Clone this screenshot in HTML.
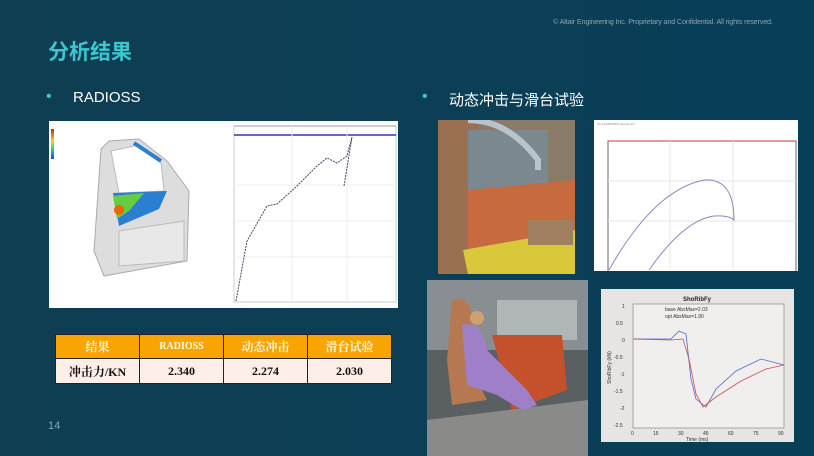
<!DOCTYPE html>
<html><head><meta charset="utf-8"><style>
*{margin:0;padding:0;box-sizing:border-box}
body{width:814px;height:456px;overflow:hidden;background:linear-gradient(90deg,#0f3e52 0%,#0c3f55 50%,#073e58 100%);font-family:"Liberation Sans","Noto Sans CJK SC",sans-serif;position:relative}
.a{position:absolute}
.copy{left:553px;top:17px;font-size:7.3px;color:#8aa3ae;letter-spacing:-0.2px}
.title{left:48px;top:36px;font-size:21px;font-weight:bold;color:#3cc6cf}
.b{font-size:15px;color:#fff}
.dot{color:#3cc6cf;font-size:16px}
table{border-collapse:collapse;font-family:"Liberation Serif","Noto Serif CJK SC",serif}
td{border:1px solid #222;text-align:center;width:84px;font-size:12px;font-weight:bold}
tr.h td{background:#f8a504;color:#fff8e0;height:24px}
tr.r td{background:#fdefe8;color:#111;height:25px}
</style></head><body>
<div class="a copy">© Altair Engineering Inc. Proprietary and Confidential. All rights reserved.</div>
<div class="a title">分析结果</div>
<div class="a dot" style="left:46px;top:88px">•</div>
<div class="a b" style="left:73px;top:89px">RADIOSS</div>
<div class="a dot" style="left:422px;top:88px">•</div>
<div class="a b" style="left:449px;top:89px">动态冲击与滑台试验</div>

<svg class="a" style="left:49px;top:121px" width="173" height="187" viewBox="0 0 173 187">
<rect width="173" height="187" fill="#fff"/>
<defs><linearGradient id="g" x1="0" y1="0" x2="0" y2="1"><stop offset="0" stop-color="#d22"/><stop offset=".4" stop-color="#dd2"/><stop offset=".7" stop-color="#2c8"/><stop offset="1" stop-color="#24d"/></linearGradient></defs>
<rect x="2" y="8" width="3" height="30" fill="url(#g)"/>
<path d="M52 28 L60 20 L90 18 L118 40 L140 70 L138 140 L55 155 L45 130 Z" fill="#ddd" stroke="#aaa"/>
<path d="M62 30 L90 24 L112 42 L115 70 L70 72 Z" fill="#fff" stroke="#bbb"/>
<path d="M64 72 L118 70 L110 88 L70 105 Z" fill="#2a7fd0"/>
<path d="M64 75 L95 72 L80 90 L68 98 Z" fill="#6c4"/>
<circle cx="70" cy="89" r="5" fill="#e60"/>
<path d="M70 110 L135 100 L135 140 L70 145 Z" fill="#e8e8e8" stroke="#bbb"/>
<path d="M85 22 L112 40" stroke="#2a7fd0" stroke-width="4"/>
</svg>
<svg class="a" style="left:222px;top:121px" width="176" height="187" viewBox="0 0 176 187">
<rect width="176" height="187" fill="#fff"/>
<rect x="12" y="5" width="162" height="176" fill="none" stroke="#ccc"/>
<line x1="12" y1="5" x2="174" y2="5" stroke="#999"/>
<line x1="12" y1="14" x2="174" y2="14" stroke="#33b" stroke-width="1.5"/>
<g stroke="#eee"><line x1="12" y1="64" x2="174" y2="64"/><line x1="12" y1="100" x2="174" y2="100"/><line x1="12" y1="136" x2="174" y2="136"/><line x1="70" y1="5" x2="70" y2="181"/><line x1="125" y1="5" x2="125" y2="181"/></g>
<path d="M14 180 L25 120 L45 85 L55 83 L75 65 L95 45 L105 37 L115 42 L125 35 L130 16 L122 65" fill="none" stroke="#446" stroke-dasharray="2 1"/>
</svg>

<svg class="a" style="left:438px;top:120px" width="137" height="154" viewBox="0 0 137 154">
<rect width="137" height="154" fill="#8a7a68"/>
<rect x="0" y="0" width="40" height="154" fill="#9a7050"/>
<rect x="30" y="10" width="80" height="60" fill="#7b8890"/>
<path d="M30 70 L137 60 L137 154 L30 154 Z" fill="#c86a40"/>
<path d="M25 130 L137 110 L137 154 L30 154 Z" fill="#d8c83a"/>
<path d="M30 0 Q70 0 100 40 L100 50" fill="none" stroke="#b8c4cc" stroke-width="6"/>
<rect x="90" y="100" width="45" height="25" fill="#a08060"/>
</svg>
<svg class="a" style="left:594px;top:120px" width="204" height="151" viewBox="0 0 204 151">
<rect width="204" height="151" fill="#fff"/>
<rect x="14" y="21" width="188" height="132" fill="none" stroke="#666"/>
<line x1="14" y1="21" x2="202" y2="21" stroke="#c33"/>
<g stroke="#e6e6e6"><line x1="14" y1="61" x2="202" y2="61"/><line x1="14" y1="101" x2="202" y2="101"/><line x1="76" y1="21" x2="76" y2="150"/><line x1="139" y1="21" x2="139" y2="150"/></g>
<path d="M15 150 Q60 70 110 60 Q140 58 140 100 Q135 95 120 96 Q90 100 55 150" fill="none" stroke="#88b"/>
<g fill="#888" font-size="3"><text x="3" y="5">SS 1234567890 sample text</text></g>
</svg>

<svg class="a" style="left:427px;top:280px" width="161" height="176" viewBox="0 0 161 176">
<rect width="161" height="176" fill="#5a5f62"/>
<rect x="0" y="0" width="161" height="70" fill="#888e92"/>
<rect x="70" y="20" width="80" height="40" fill="#b0b5b8"/>
<path d="M0 140 L161 120 L161 176 L0 176 Z" fill="#8a8a88"/>
<path d="M65 55 L135 55 L140 110 L85 130 Z" fill="#c5502c"/>
<path d="M25 20 Q45 15 45 40 L50 100 L60 120 L25 125 L20 80 Z" fill="#b57850"/>
<path d="M35 45 Q55 40 60 70 L100 110 L110 125 L95 130 L70 115 L40 105 Z" fill="#9f7fc8"/>
<circle cx="50" cy="38" r="7" fill="#d0a070"/>
</svg>
<svg class="a" style="left:601px;top:289px" width="193" height="153" viewBox="0 0 193 153">
<rect width="193" height="153" fill="#e6e5e3"/>
<text x="96" y="12" font-size="6" font-weight="bold" text-anchor="middle" fill="#222" font-family="Liberation Sans">ShoRibFy</text>
<rect x="32" y="15" width="151" height="124" fill="#f0efed" stroke="#777" stroke-width=".6"/>
<g font-size="5" fill="#333" font-family="Liberation Sans">
<text x="21" y="19">1</text><text x="15" y="36">0.5</text><text x="21" y="53">0</text><text x="13" y="70">-0.5</text><text x="19" y="87">-1</text><text x="13" y="104">-1.5</text><text x="19" y="121">-2</text><text x="13" y="138">-2.5</text>
<text x="30" y="146">0</text><text x="52" y="146">15</text><text x="77" y="146">30</text><text x="102" y="146">45</text><text x="127" y="146">60</text><text x="152" y="146">75</text><text x="177" y="146">90</text>
<text x="85" y="152">Time (ms)</text>
<text x="64" y="22">base AbsMax=2.03</text><text x="64" y="29">opt AbsMax=1.90</text>
<text transform="translate(10,95) rotate(-90)">ShoRibFy (kN)</text>
</g>
<path d="M32 50 L70 50 L78 42 L85 45 L90 90 L95 110 L105 118 L115 100 L135 82 L160 70 L183 76" fill="none" stroke="#5566cc" stroke-width=".8"/>
<path d="M32 50 L70 51 L82 50 L88 70 L95 105 L102 118 L115 108 L140 92 L165 80 L183 76" fill="none" stroke="#c85050" stroke-width=".8"/>
</svg>

<table class="a" style="left:55px;top:334px">
<tr class="h"><td>结果</td><td style="font-size:10px">RADIOSS</td><td>动态冲击</td><td>滑台试验</td></tr>
<tr class="r"><td>冲击力/KN</td><td>2.340</td><td>2.274</td><td>2.030</td></tr>
</table>
<div class="a" style="left:48px;top:420px;font-size:11px;color:#8aa3ae">14</div>
</body></html>
